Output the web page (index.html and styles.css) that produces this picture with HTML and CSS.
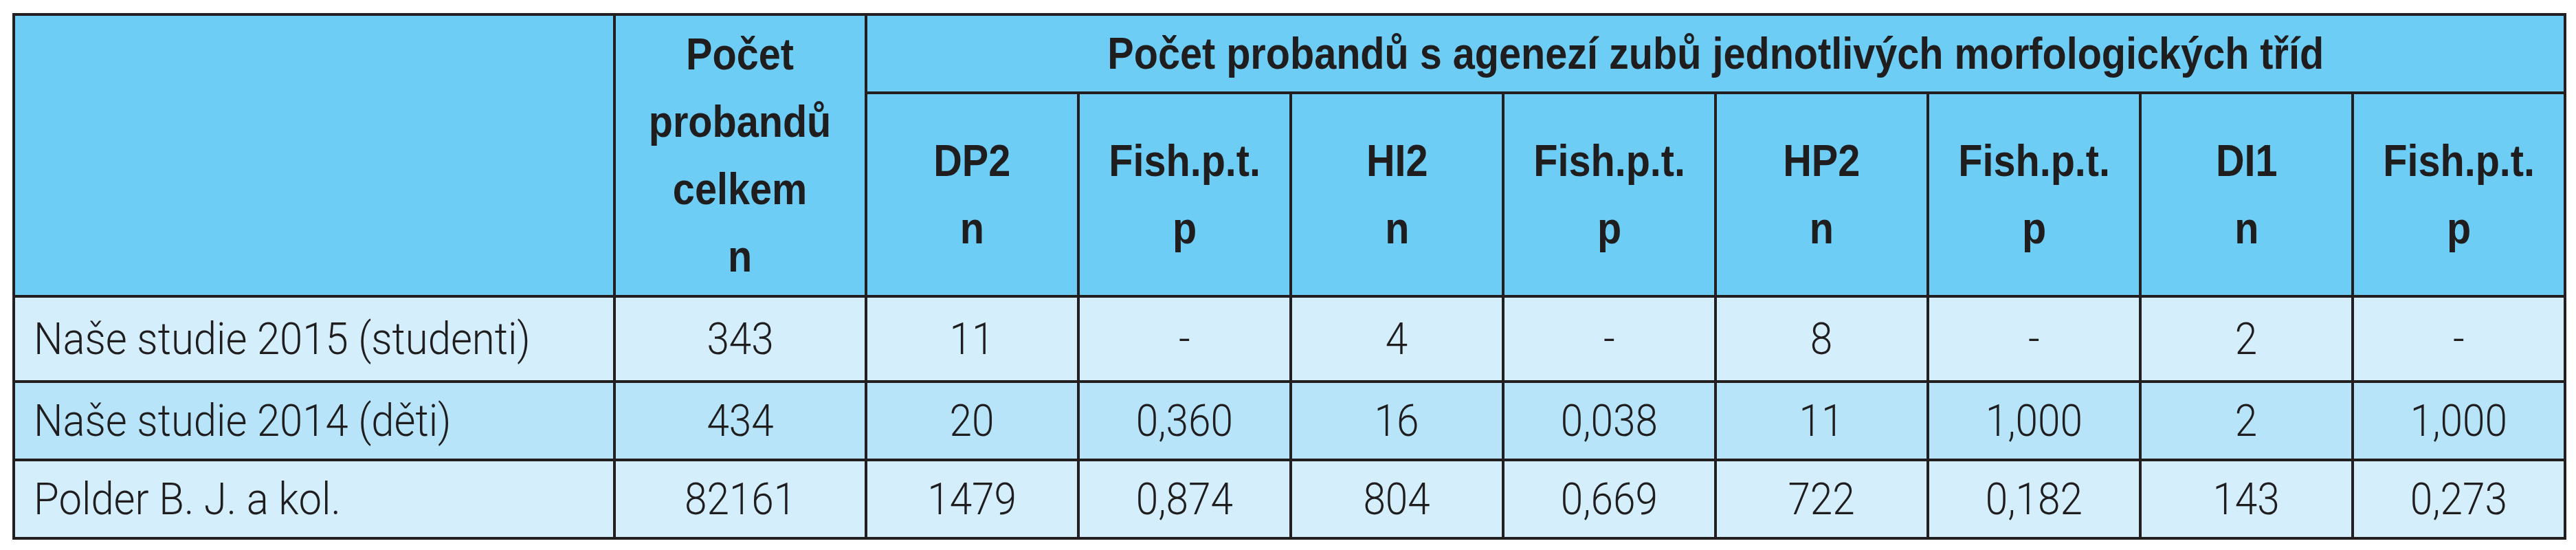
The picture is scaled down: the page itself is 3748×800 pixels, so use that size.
FILE: index.html
```html
<!DOCTYPE html>
<html lang="cs">
<head>
<meta charset="utf-8">
<title>Počet probandů s agenezí zubů</title>
<link rel="stylesheet" href="styles.css">
</head>
<body>
<table class="data">
  <colgroup>
    <col class="c-label">
    <col class="c-total">
    <col class="c-val"><col class="c-val"><col class="c-val"><col class="c-val">
    <col class="c-val"><col class="c-val"><col class="c-val"><col class="c-val">
  </colgroup>
  <thead>
    <tr class="r-title">
      <th rowspan="2"></th>
      <th rowspan="2"><span class="txt">Počet<br>probandů<br>celkem<br>n</span></th>
      <th colspan="8"><span class="txt">Počet probandů s agenezí zubů jednotlivých morfologických tříd</span></th>
    </tr>
    <tr class="r-sub">
      <th><span class="txt">DP2<br>n</span></th>
      <th><span class="txt">Fish.p.t.<br>p</span></th>
      <th><span class="txt">HI2<br>n</span></th>
      <th><span class="txt">Fish.p.t.<br>p</span></th>
      <th><span class="txt">HP2<br>n</span></th>
      <th><span class="txt">Fish.p.t.<br>p</span></th>
      <th><span class="txt">DI1<br>n</span></th>
      <th><span class="txt">Fish.p.t.<br>p</span></th>
    </tr>
  </thead>
  <tbody>
    <tr class="r-body r-first row-light">
      <td class="label"><span class="txt">Naše studie 2015 (studenti)</span></td>
      <td><span class="txt">343</span></td>
      <td><span class="txt">11</span></td>
      <td><span class="txt">-</span></td>
      <td><span class="txt">4</span></td>
      <td><span class="txt">-</span></td>
      <td><span class="txt">8</span></td>
      <td><span class="txt">-</span></td>
      <td><span class="txt">2</span></td>
      <td><span class="txt">-</span></td>
    </tr>
    <tr class="r-body row-mid">
      <td class="label"><span class="txt">Naše studie 2014 (děti)</span></td>
      <td><span class="txt">434</span></td>
      <td><span class="txt">20</span></td>
      <td><span class="txt">0,360</span></td>
      <td><span class="txt">16</span></td>
      <td><span class="txt">0,038</span></td>
      <td><span class="txt">11</span></td>
      <td><span class="txt">1,000</span></td>
      <td><span class="txt">2</span></td>
      <td><span class="txt">1,000</span></td>
    </tr>
    <tr class="r-body row-light">
      <td class="label"><span class="txt">Polder B. J. a kol.</span></td>
      <td><span class="txt">82161</span></td>
      <td><span class="txt">1479</span></td>
      <td><span class="txt">0,874</span></td>
      <td><span class="txt">804</span></td>
      <td><span class="txt">0,669</span></td>
      <td><span class="txt">722</span></td>
      <td><span class="txt">0,182</span></td>
      <td><span class="txt">143</span></td>
      <td><span class="txt">0,273</span></td>
    </tr>
  </tbody>
</table>
</body>
</html>
```

FILE: styles.css
```css
html, body {
  margin: 0;
  padding: 0;
  background: #ffffff;
}

.data {
  box-sizing: border-box;
  width: 3716px;
  margin: 19px 0 0 18px;
  border-collapse: separate;
  border-spacing: 0;
  table-layout: fixed;
  border-top: 4px solid #231f20;
  border-left: 4px solid #231f20;
  color: #1f1d1e;
}

.c-label { width: 874px; }
.c-total { width: 366px; }
.c-val { width: 309px; }

.data th,
.data td {
  padding: 0;
  border-right: 4px solid #231f20;
  border-bottom: 4px solid #231f20;
  text-align: center;
  vertical-align: middle;
}

.data th {
  background: #6dcdf4;
  font-family: "Liberation Sans", Arial, sans-serif;
  font-weight: 700;
  font-size: 64px;
  line-height: 98px;
}

.data td {
  font-family: Roboto, "Liberation Sans", sans-serif;
  font-weight: 300;
  font-size: 65px;
  line-height: 1;
}

.txt {
  display: inline-block;
  white-space: nowrap;
  transform: scaleX(0.9);
  transform-origin: center center;
}

.r-title { height: 114px; }
.r-sub { height: 296px; }
.r-body { height: 114px; }
.r-first { height: 124px; }

.row-light td { background: #d4eefb; }
.row-mid td { background: #b8e4f9; }

.data td.label {
  text-align: left;
  padding-left: 27px;
}

.data td.label .txt {
  transform: scaleX(0.92);
  transform-origin: left center;
}
```
